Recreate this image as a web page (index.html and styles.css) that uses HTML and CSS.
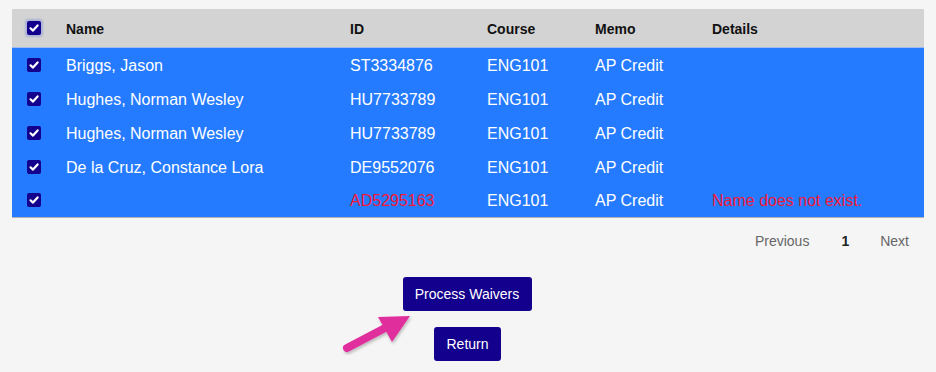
FILE: index.html
```html
<!DOCTYPE html>
<html>
<head>
<meta charset="utf-8">
<link rel="stylesheet" href="styles.css">
</head>
<body>
<div class="page">
  <table class="grid">
    <colgroup>
      <col class="c-check"><col class="c-name"><col class="c-id"><col class="c-course"><col class="c-memo"><col class="c-details">
    </colgroup>
    <thead>
      <tr>
        <th><span class="cb focus"><svg viewBox="0 0 14 14"><path d="M3.5 7.3 L6 9.6 L10.6 4.4" /></svg></span></th>
        <th>Name</th><th>ID</th><th>Course</th><th>Memo</th><th>Details</th>
      </tr>
    </thead>
    <tbody>
      <tr>
        <td><span class="cb"><svg viewBox="0 0 14 14"><path d="M3.5 7.3 L6 9.6 L10.6 4.4" /></svg></span></td>
        <td>Briggs, Jason</td><td>ST3334876</td><td>ENG101</td><td>AP Credit</td><td></td>
      </tr>
      <tr>
        <td><span class="cb"><svg viewBox="0 0 14 14"><path d="M3.5 7.3 L6 9.6 L10.6 4.4" /></svg></span></td>
        <td>Hughes, Norman Wesley</td><td>HU7733789</td><td>ENG101</td><td>AP Credit</td><td></td>
      </tr>
      <tr>
        <td><span class="cb"><svg viewBox="0 0 14 14"><path d="M3.5 7.3 L6 9.6 L10.6 4.4" /></svg></span></td>
        <td>Hughes, Norman Wesley</td><td>HU7733789</td><td>ENG101</td><td>AP Credit</td><td></td>
      </tr>
      <tr>
        <td><span class="cb"><svg viewBox="0 0 14 14"><path d="M3.5 7.3 L6 9.6 L10.6 4.4" /></svg></span></td>
        <td>De la Cruz, Constance Lora</td><td>DE9552076</td><td>ENG101</td><td>AP Credit</td><td></td>
      </tr>
      <tr>
        <td><span class="cb"><svg viewBox="0 0 14 14"><path d="M3.5 7.3 L6 9.6 L10.6 4.4" /></svg></span></td>
        <td></td><td class="err">AD5295163</td><td>ENG101</td><td>AP Credit</td><td class="err">Name does not exist.</td>
      </tr>
    </tbody>
  </table>
  <div class="pager">
    <span class="pg">Previous</span>
    <span class="pg cur">1</span>
    <span class="pg next">Next</span>
  </div>
  <div class="actions">
    <button class="btn btn-process">Process Waivers</button>
    <button class="btn btn-return">Return</button>
  </div>
  <svg class="arrow" width="90" height="60" viewBox="0 0 90 60">
    <defs>
      <filter id="sh" x="-20%" y="-20%" width="140%" height="140%">
        <feDropShadow dx="1" dy="2" stdDeviation="1.5" flood-color="#000" flood-opacity="0.25"/>
      </filter>
    </defs>
    <g filter="url(#sh)">
      <line x1="12" y1="48" x2="52" y2="27" stroke="#e02f9c" stroke-width="8" stroke-linecap="round"/>
      <polygon points="75,16 43,17 57,42" fill="#e02f9c"/>
    </g>
  </svg>
</div>
</body>
</html>
```
FILE: styles.css
```css
html, body {
  margin: 0;
  padding: 0;
  background: #f5f5f5;
}
body {
  font-family: "Liberation Sans", Arial, sans-serif;
}
.page {
  position: relative;
  width: 936px;
  height: 372px;
  padding: 9px 12px 0 12px;
  box-sizing: border-box;
}
.grid {
  width: 912px;
  border-collapse: collapse;
  table-layout: fixed;
  border-bottom: 1px solid #b3b3b3;
}
.c-check { width: 46px; }
.c-name { width: 284px; }
.c-id { width: 137px; }
.c-course { width: 108px; }
.c-memo { width: 117px; }
.c-details { width: 220px; }
.grid th {
  background: #d3d3d3;
  height: 38px;
  padding: 2px 8px 0 8px;
  text-align: left;
  font-size: 14px;
  font-weight: bold;
  color: #111;
  border-bottom: 1px solid #9dbcf0;
  box-sizing: border-box;
}
.grid td {
  background: #257bff;
  height: 34px;
  padding: 3px 8px 0 8px;
  font-size: 16px;
  color: #fff;
  white-space: nowrap;
  box-sizing: border-box;
}
.grid th:first-child, .grid td:first-child {
  padding: 1px 0 0 15px;
}
.grid td.err {
  color: #f21838;
}
.cb {
  display: block;
  width: 14px;
  height: 14px;
  border-radius: 2px;
  background: #13008c;
}
.cb svg {
  display: block;
  width: 14px;
  height: 14px;
  fill: none;
  stroke: #fff;
  stroke-width: 2.2;
  stroke-linecap: round;
  stroke-linejoin: round;
}
.cb.focus {
  box-shadow: 0 0 2px 2px rgba(120, 140, 220, 0.45);
}
.pager {
  display: flex;
  justify-content: flex-end;
  align-items: center;
  height: 46px;
  padding-right: 15px;
  font-size: 14px;
}
.pg {
  color: #666;
}
.pg.cur {
  color: #222;
  font-weight: bold;
  margin-left: 32px;
}
.pg.next {
  margin-left: 31px;
}
.actions {
  display: flex;
  flex-direction: column;
  align-items: center;
  gap: 16px;
  padding-top: 13px;
}
.btn {
  background: #13008c;
  color: #fff;
  border: none;
  border-radius: 3px;
  font-family: "Liberation Sans", Arial, sans-serif;
  font-size: 14px;
  height: 34px;
  padding: 0 12px;
  cursor: pointer;
}
.btn-process { width: 129px; margin-left: -2px; }
.btn-return { width: 67px; margin-left: -1px; }
.arrow {
  position: absolute;
  left: 335px;
  top: 300px;
}
```
